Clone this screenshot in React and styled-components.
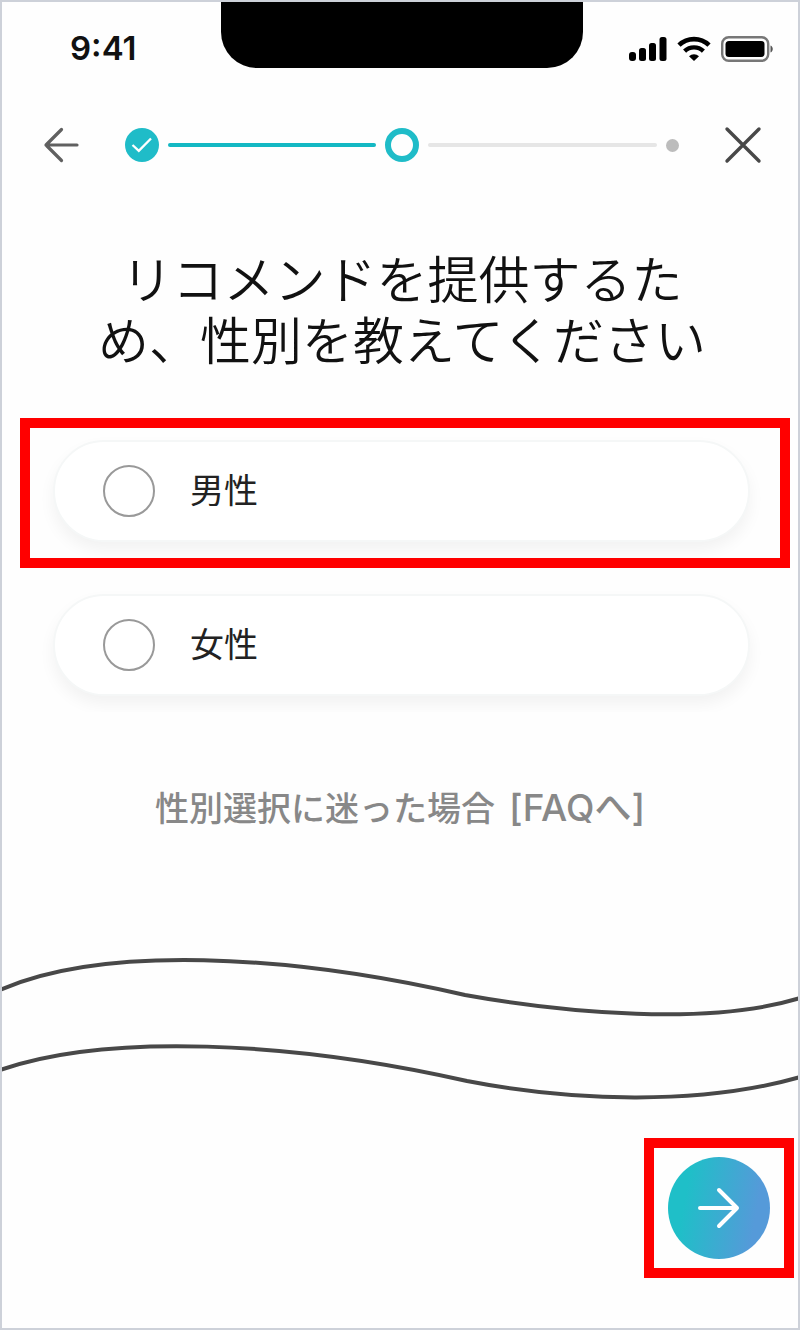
import React, { useState } from 'react';
import styled, { createGlobalStyle, css } from 'styled-components';

const TEAL = '#1fbcc8';

const GlobalStyle = createGlobalStyle`
  * {
    box-sizing: border-box;
  }
  body {
    margin: 0;
    background: #fefefe;
    font-family: Inter, 'Noto Sans CJK JP', sans-serif;
  }
  svg {
    display: block;
  }
`;

const Screen = styled.div`
  min-height: 100vh;
  border: 2px solid #cdd1d9;
  display: flex;
  flex-direction: column;
`;

const StatusBar = styled.header`
  display: grid;
  grid-template-columns: 1fr 362px 1fr;
  padding-left: 4px;
  height: 66px;
`;

const Time = styled.div`
  padding: 26px 0 0 64px;
  font-size: 33px;
  line-height: 40px;
  font-weight: 600;
  color: #111;
`;

const Notch = styled.div`
  background: #000;
  border-radius: 0 0 36px 36px;
`;

const StatusIcons = styled.div`
  display: flex;
  justify-content: flex-end;
  align-items: flex-start;
  gap: 10px;
  padding: 34px 25px 0 0;
`;

const NavBar = styled.nav`
  display: flex;
  align-items: center;
  justify-content: space-between;
  padding: 57px 36px 0 40px;
`;

const IconButton = styled.button`
  display: flex;
  flex: none;
  padding: 0;
  border: 0;
  background: none;
  color: ${props => props.$color};
  cursor: pointer;
`;

const Stepper = styled.div`
  flex: 1;
  display: flex;
  align-items: center;
  gap: 9px;
  margin: 0 45px;
`;

const stepStyles = {
  done: css`
    width: 34px;
    height: 34px;
    background: ${TEAL};
  `,
  current: css`
    width: 34px;
    height: 34px;
    border: 6px solid ${TEAL};
  `,
  todo: css`
    width: 13px;
    height: 13px;
    background: #bcbcbc;
  `,
};

const Step = styled.span`
  flex: none;
  display: flex;
  align-items: center;
  justify-content: center;
  border-radius: 50%;
  ${props => stepStyles[props.$state]}
`;

const StepLine = styled.span`
  flex: ${props => props.$grow};
  height: 4px;
  border-radius: 2px;
  background: ${props => (props.$active ? '#14b8c3' : '#e6e6e6')};
`;

const Title = styled.h1`
  width: 100%;
  max-width: 624px;
  margin: 85px auto 0;
  padding-left: 4px;
  font-size: 51px;
  line-height: 61px;
  font-weight: 350;
  text-align: center;
  color: #111;
`;

const Options = styled.fieldset`
  display: flex;
  flex-direction: column;
  gap: 4px;
  min-width: 0;
  margin: 46px 8px 0 18px;
  padding: 0;
  border: 0;
`;

const Marker = styled.div`
  overflow: hidden;
  border: 10px solid ${props => (props.$on ? '#f00' : 'transparent')};
`;

const OptionMarker = styled(Marker)`
  padding: 12px 30px 16px 23px;
`;

const Option = styled.label`
  display: flex;
  align-items: center;
  gap: 35px;
  height: 102px;
  padding-left: 48px;
  border: 2px solid #f5f7f7;
  border-radius: 51px;
  background: #fff;
  box-shadow: 0 8px 16px rgba(0, 0, 0, 0.05);
  font-size: 34px;
  line-height: 48px;
  color: #222;
  cursor: pointer;
`;

const Radio = styled.input`
  appearance: none;
  flex: none;
  width: 52px;
  height: 52px;
  margin: 0;
  border: 2px solid #999;
  border-radius: 50%;
  &:checked {
    border: 14px solid ${TEAL};
  }
`;

const FaqLink = styled.a`
  align-self: center;
  margin-top: 61px;
  font-size: 34px;
  line-height: 50px;
  font-weight: 500;
  color: #888;
  text-decoration: none;
`;

const FaqTag = styled.span`
  margin-left: 5px;
  font-size: 37px;
`;

const Waves = styled.svg`
  width: 100%;
  height: 146px;
  margin-top: 121px;
  fill: none;
  stroke: #484848;
  stroke-width: 4;
`;

const Footer = styled.footer`
  display: flex;
  justify-content: flex-end;
  padding: 37px 4px 50px;
`;

const NextMarker = styled(Marker)`
  padding: 9px 14px;
`;

const NextButton = styled.button`
  display: flex;
  align-items: center;
  justify-content: center;
  width: 102px;
  height: 102px;
  padding: 0;
  border: 0;
  border-radius: 50%;
  background: linear-gradient(100deg, #1fbfc8 20%, #559ad9 82%);
  color: #fff;
  cursor: pointer;
`;

const SignalIcon = () => (
  <svg width="38" height="26" viewBox="0 0 38 26" fill="#000">
    <rect x="0" y="16" width="7" height="9" rx="3" />
    <rect x="10" y="12" width="7" height="13" rx="2.5" />
    <rect x="20" y="7" width="7" height="18" rx="2.5" />
    <rect x="30.5" y="1" width="7" height="24" rx="2.5" />
  </svg>
);

const WifiIcon = () => (
  <svg width="34" height="26" viewBox="0 0 34 26" fill="none" stroke="#000">
    <path d="M2 9.2a21.5 21.5 0 0 1 30 0" strokeWidth="4.6" />
    <path d="M7.6 15.2a13.5 13.5 0 0 1 18.8 0" strokeWidth="4.4" />
    <path d="M12 20.2a7.2 7.2 0 0 1 10 0l-5 4.8z" fill="#000" stroke="none" />
  </svg>
);

const BatteryIcon = () => (
  <svg width="52" height="26" viewBox="0 0 52 26">
    <rect x="1.2" y="1.2" width="46" height="23.6" rx="6.5" fill="none" stroke="#777" strokeWidth="2.4" />
    <rect x="4.5" y="5" width="39" height="16" rx="3.5" />
    <path d="M49.5 9.5c3 1.2 3 5.8 0 7z" fill="#555" />
  </svg>
);

const options = [
  { value: 'male', label: '男性', marked: true },
  { value: 'female', label: '女性', marked: false },
];

export function GenderStep() {
  const [gender, setGender] = useState('');

  return (
    <Screen>
      <StatusBar>
        <Time>9:41</Time>
        <Notch />
        <StatusIcons>
          <SignalIcon />
          <WifiIcon />
          <BatteryIcon />
        </StatusIcons>
      </StatusBar>

      <NavBar>
        <IconButton type="button" aria-label="戻る" $color="#606060">
          <svg width="38" height="40" viewBox="0 0 38 40" fill="none" stroke="currentColor" strokeWidth="3.2" strokeLinecap="round" strokeLinejoin="round">
            <path d="M35 20H4M19.500 4.500 4 20l15.500 15.500" />
          </svg>
        </IconButton>
        <Stepper>
          <Step $state="done">
            <svg width="22" height="16" viewBox="0 0 22 16" fill="none" stroke="#fff" strokeWidth="2.3">
              <path d="M1.500 8 7.800 13.800 20 1.500" />
            </svg>
          </Step>
          <StepLine $grow={10} $active />
          <Step $state="current" />
          <StepLine $grow={11} />
          <Step $state="todo" />
        </Stepper>
        <IconButton type="button" aria-label="閉じる" $color="#484848">
          <svg width="38" height="40" viewBox="0 0 38 40" fill="none" stroke="currentColor" strokeWidth="3.4" strokeLinecap="round">
            <path d="M3 4 35 36M35 4 3 36" />
          </svg>
        </IconButton>
      </NavBar>

      <Title>リコメンドを提供するため、性別を教えてください</Title>

      <Options aria-label="性別">
        {options.map(option => (
          <OptionMarker key={option.value} $on={option.marked}>
            <Option htmlFor={option.value}>
              <Radio
                type="radio"
                name="gender"
                id={option.value}
                value={option.value}
                checked={gender === option.value}
                onChange={() => setGender(option.value)}
              />
              {option.label}
            </Option>
          </OptionMarker>
        ))}
      </Options>

      <FaqLink href="#faq">
        性別選択に迷った場合 <FaqTag>[FAQへ]</FaqTag>
      </FaqLink>

      <Waves viewBox="0 0 796 146" preserveAspectRatio="none" aria-hidden="true">
        <path d="M-2 35C100 -10 285 -1 463 40C563 58 708 71 798 43" />
        <path d="M-2 115C104 78 288 86 465 126C568 146 698 151 798 122" />
      </Waves>

      <Footer>
        <NextMarker $on>
          <NextButton type="button" aria-label="次へ">
            <svg width="44" height="44" viewBox="0 0 44 44" fill="none" stroke="currentColor" strokeWidth="4" strokeLinecap="round" strokeLinejoin="round">
              <path d="M3 22H40M22 4 40 22 22 40" />
            </svg>
          </NextButton>
        </NextMarker>
      </Footer>
    </Screen>
  );
}

export default function App() {
  return (
    <>
      <GlobalStyle />
      <GenderStep />
    </>
  );
}
